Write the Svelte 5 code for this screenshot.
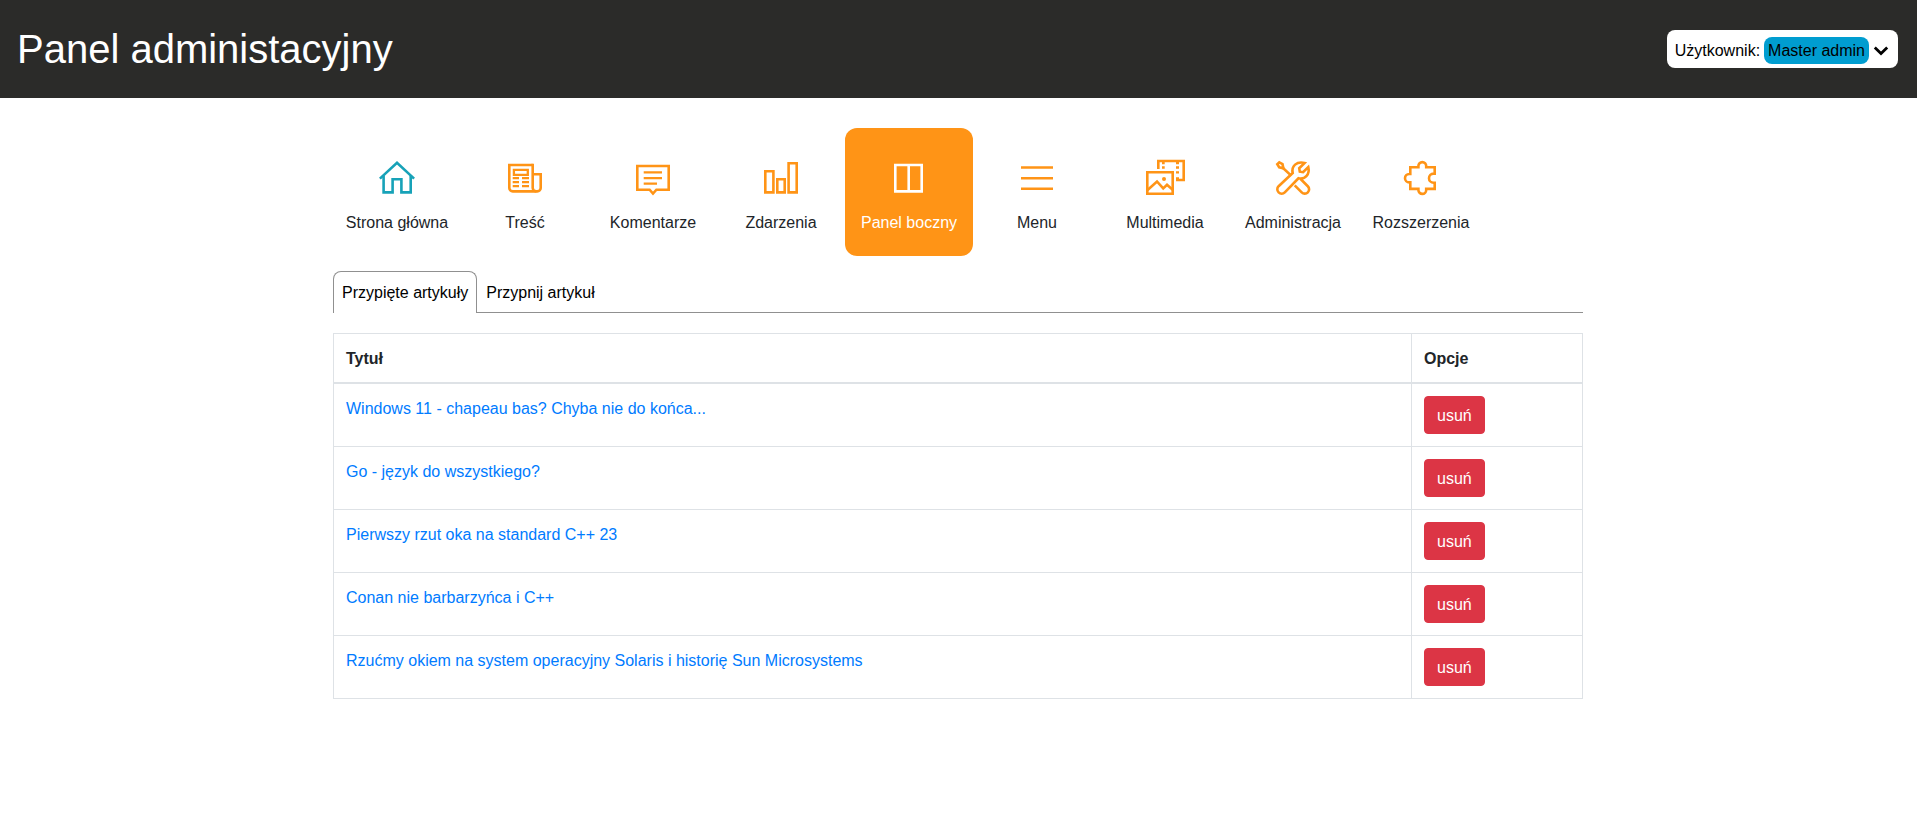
<script lang="ts">
  let activeSection = $state('Panel boczny');
  let activeTab = $state('Przypięte artykuły');

  const sections = [
    { label: 'Strona główna', icon: 'home' },
    { label: 'Treść', icon: 'news' },
    { label: 'Komentarze', icon: 'comments' },
    { label: 'Zdarzenia', icon: 'events' },
    { label: 'Panel boczny', icon: 'sidebar' },
    { label: 'Menu', icon: 'menu' },
    { label: 'Multimedia', icon: 'media' },
    { label: 'Administracja', icon: 'tools' },
    { label: 'Rozszerzenia', icon: 'puzzle' }
  ];

  const tabs = ['Przypięte artykuły', 'Przypnij artykuł'];

  let articles = $state([
    'Windows 11 - chapeau bas? Chyba nie do końca...',
    'Go - język do wszystkiego?',
    'Pierwszy rzut oka na standard C++ 23',
    'Conan nie barbarzyńca i C++',
    'Rzućmy okiem na system operacyjny Solaris i historię Sun Microsystems'
  ]);

  function remove(title: string) {
    articles = articles.filter((article) => article !== title);
  }
</script>

<header class="topbar">
  <h1>Panel administacyjny</h1>
  <button class="user" type="button">
    <span>Użytkownik:</span>
    <span class="user-name">Master admin</span>
    <svg class="chevron" viewBox="0 0 16 10" aria-hidden="true">
      <path d="M1.8 1.6 8 7.6 14.2 1.6" />
    </svg>
  </button>
</header>

<main class="container">
  <nav class="sections">
    {#each sections as section}
      <a
        href="#{section.icon}"
        class="section"
        class:home={section.icon === 'home'}
        class:active={section.label === activeSection}
        onclick={() => (activeSection = section.label)}
      >
        <svg class="icon" viewBox="-1 0 40 40" aria-hidden="true">
          {#if section.icon === 'home'}
            <path d="M1.9 20.6 19 4.7 36.1 20.6" />
            <path d="M5.6 17.5V34.4H14.6V21.3H23.4V34.4H32.7V17.5" />
          {:else if section.icon === 'news'}
            <path d="M26.7 7H3.3V30A3.4 3.4 0 0 0 6.7 33.4H31.3A3.4 3.4 0 0 0 34.7 30V16.3H26.7" />
            <path d="M26.7 5.7V30A3.5 3.5 0 0 0 30.2 33.4" />
            <path class="thin" d="M7.9 11.9H21.8V16.9H7.9Z" />
            <path class="thin" d="M6.7 20.2H13M16 20.2H23M6.7 24.2H13M16 24.2H23M6.7 28.2H13M16 28.2H23" />
          {:else if section.icon === 'comments'}
            <path d="M3.3 8H34.7V31.7H22.4L19 35.6 15.6 31.7H3.3Z" />
            <path class="thin" d="M9.7 14.4H28M9.7 20.1H28M9.7 25.6H23" />
          {:else if section.icon === 'events'}
            <path d="M3.3 13.3H11.4V34.4H3.3ZM15.3 21.3H22.7V34.4H15.3ZM26.6 5.3H34.7V34.4H26.6Z" />
          {:else if section.icon === 'sidebar'}
            <path d="M5.3 7H31.7V33.4H5.3Z" />
            <path d="M18.7 7V33.4" />
          {:else if section.icon === 'menu'}
            <path d="M3 9.5H35M3 20.2H35M3 30.7H35" />
          {:else if section.icon === 'media'}
            <path d="M1.3 14.3H26.7V35.7H1.3Z" />
            <path d="M1.3 32.3 11 23.5 17.2 30.4 21 26.8 26.7 31.8" />
            <path d="M12.3 11V3H37.7V22H30" />
            <path class="thin" d="M16 5.2H18.7M16 9.5H18.7M30 5.2H33M30 9.5H33M30 14.4H33M30 20.3H33" />
            <circle class="fill" cx="18" cy="21" r="2" />
          {:else if section.icon === 'tools'}
            <path d="M4.6 28.2 18.7 15C17.2 8 22.6 3 30.6 4.9L25.2 10.2 25.8 13.7 29.1 14.2 34.3 9C36 16.2 31.3 21.8 24.5 20.3L10.8 34.4A4.3 4.3 0 0 1 4.6 28.2Z" />
            <path d="M20.7 27.3 27.7 34.4A4.3 4.3 0 0 0 33.8 28.2L26.6 21M9 10 17.2 17.6" />
            <path d="M5.3 4.3 8.5 6 9.4 10.2 5.2 9.3 3.3 6.2Z" />
          {:else}
            <path d="M8.3 9.3H16.4V8A3.9 3.9 0 0 1 24.2 8V9.3H32.7V15.6H31.6A4.6 4.6 0 0 0 31.6 24.8H32.7V30.9H24.2V32A3.9 3.9 0 0 1 16.4 32V30.9H8.3V24.4H7.2A4.2 4.2 0 0 1 7.2 16H8.3Z" />
          {/if}
        </svg>
        <span>{section.label}</span>
      </a>
    {/each}
  </nav>

  <div class="tabs">
    {#each tabs as tab}
      <button type="button" class="tab" class:selected={tab === activeTab} onclick={() => (activeTab = tab)}>
        {tab}
      </button>
    {/each}
    <div class="tabs-rest"></div>
  </div>

  <table class="articles">
    <thead>
      <tr>
        <th>Tytuł</th>
        <th class="options">Opcje</th>
      </tr>
    </thead>
    <tbody>
      {#each articles as article}
        <tr>
          <td class="title"><a href="#article">{article}</a></td>
          <td><button type="button" class="delete" onclick={() => remove(article)}>usuń</button></td>
        </tr>
      {/each}
    </tbody>
  </table>
</main>

<style>
  :global(body) {
    margin: 0;
    background: #fff;
    color: #212529;
    font-family: 'Liberation Sans', Arial, sans-serif;
    font-size: 16px;
    line-height: 24px;
  }

  button {
    font: inherit;
    cursor: pointer;
  }

  .topbar {
    display: flex;
    align-items: center;
    justify-content: space-between;
    padding: 25px 19px 25px 17px;
    background: #2b2b29;
  }

  h1 {
    margin: 0;
    color: #fff;
    font-size: 40px;
    font-weight: 400;
    line-height: 48px;
  }

  .user {
    display: flex;
    align-items: center;
    gap: 4px;
    padding: 7px 9px 4px 8px;
    border: 0;
    border-radius: 8px;
    background: #fff;
    color: #000;
  }

  .user-name {
    padding: 2px 4px 1px;
    border-radius: 8px;
    background: #009dd0;
  }

  .chevron {
    width: 16px;
    height: 10px;
    fill: none;
    stroke: #000;
    stroke-width: 2.8;
  }

  .container {
    max-width: 1250px;
    margin: 0 auto;
    padding: 30px 1px 0 0;
  }

  .sections {
    display: flex;
    flex-wrap: wrap;
  }

  .section {
    display: flex;
    flex-direction: column;
    align-items: center;
    gap: 13px;
    box-sizing: border-box;
    width: 128px;
    height: 128px;
    padding-top: 30px;
    border-radius: 12px;
    color: #212529;
    text-decoration: none;
    white-space: nowrap;
  }

  .section.active {
    background: #ff9416;
    color: #fff;
  }

  .icon {
    width: 40px;
    height: 40px;
    fill: none;
    stroke: #ff9416;
    stroke-width: 2.6;
  }

  .icon .thin {
    stroke-width: 2.3;
  }

  .icon .fill {
    fill: #ff9416;
    stroke: none;
  }

  .home .icon {
    stroke: #17a2b8;
  }

  .active .icon {
    stroke: #fff;
  }

  .tabs {
    display: flex;
    margin-top: 15px;
  }

  .tab {
    padding: 10px 9px 7px;
    border: 0;
    border-bottom: 1px solid #909090;
    background: none;
    color: #000;
  }

  .tab.selected {
    padding: 9px 8px 8px;
    border: 1px solid #909090;
    border-bottom: 0;
    border-radius: 8px 8px 0 0;
  }

  .tabs-rest {
    flex: 1;
    border-bottom: 1px solid #909090;
  }

  .articles {
    width: 100%;
    margin-top: 20px;
    border: 1px solid #dee2e6;
    border-collapse: collapse;
  }

  th,
  td {
    padding: 12px;
    border: 1px solid #dee2e6;
    text-align: left;
    vertical-align: top;
  }

  th,
  .title {
    padding: 13px 12px 11px;
  }

  th {
    border-bottom-width: 2px;
  }

  .options {
    width: 146px;
  }

  td a {
    color: #007bff;
    text-decoration: none;
  }

  .delete {
    display: block;
    padding: 7px 12px 5px;
    border: 1px solid #dc3545;
    border-radius: 4px;
    background: #dc3545;
    color: #fff;
  }
</style>
